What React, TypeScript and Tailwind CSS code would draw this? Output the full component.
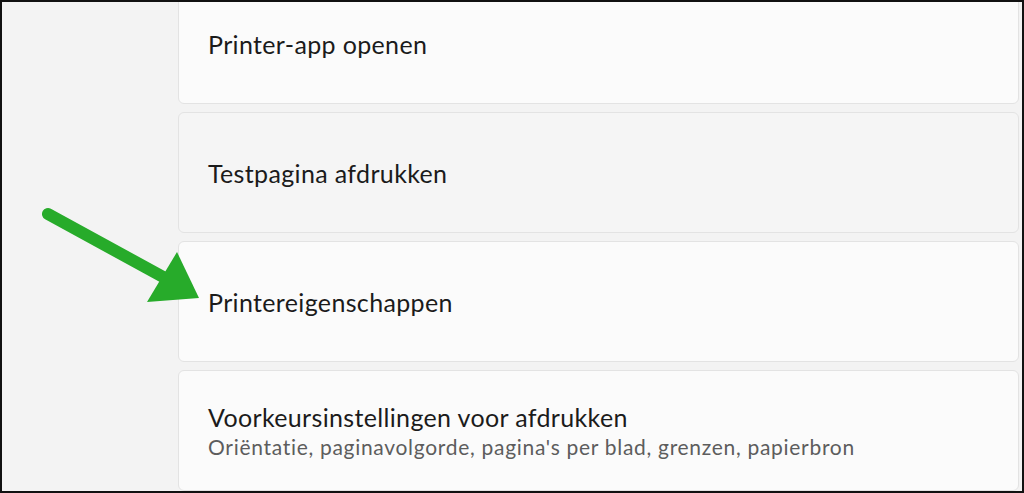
import React from "react";

const font = { fontFamily: "Lato, 'Noto Sans', sans-serif" };

function Card({ title, subtitle, hover }: { title: string; subtitle?: string; hover?: boolean }) {
  return (
    <div
      className={`h-[121px] shrink-0 rounded-[6px] border border-[#e3e3e3] flex flex-col justify-center pl-[29px] ${
        hover ? "bg-[#f5f5f5]" : "bg-[#fbfbfb]"
      }`}
    >
      <div className="text-[25px] leading-[32px] tracking-[0.35px] text-[#1b1b1b]">{title}</div>
      {subtitle && (
        <div className="text-[21px] leading-[28px] tracking-[0.7px] text-[#5d5d5d]">{subtitle}</div>
      )}
    </div>
  );
}

export default function App() {
  return (
    <div
      className="relative w-[1024px] h-[493px] overflow-hidden border-2 border-[#111] bg-[#f3f3f3]"
      style={font}
    >
      <div className="flex h-full">
        <div className="w-[176px] shrink-0" />
        <div className="flex-1 flex flex-col gap-2 -mt-[19px] mr-[3px]">
          <Card title="Printer-app openen" />
          <Card title="Testpagina afdrukken" hover />
          <Card title="Printereigenschappen" />
          <Card
            title="Voorkeursinstellingen voor afdrukken"
            subtitle="Oriëntatie, paginavolgorde, pagina's per blad, grenzen, papierbron"
          />
        </div>
      </div>

      {/* groene pijl */}
      <svg className="absolute left-0 top-0" width="1024" height="493" viewBox="0 0 1024 493">
        <line x1="46" y1="212" x2="163" y2="276" stroke="#27ab2a" strokeWidth="12" strokeLinecap="round" />
        <polygon points="175,250 197,296 145,300" fill="#27ab2a" />
      </svg>
    </div>
  );
}
